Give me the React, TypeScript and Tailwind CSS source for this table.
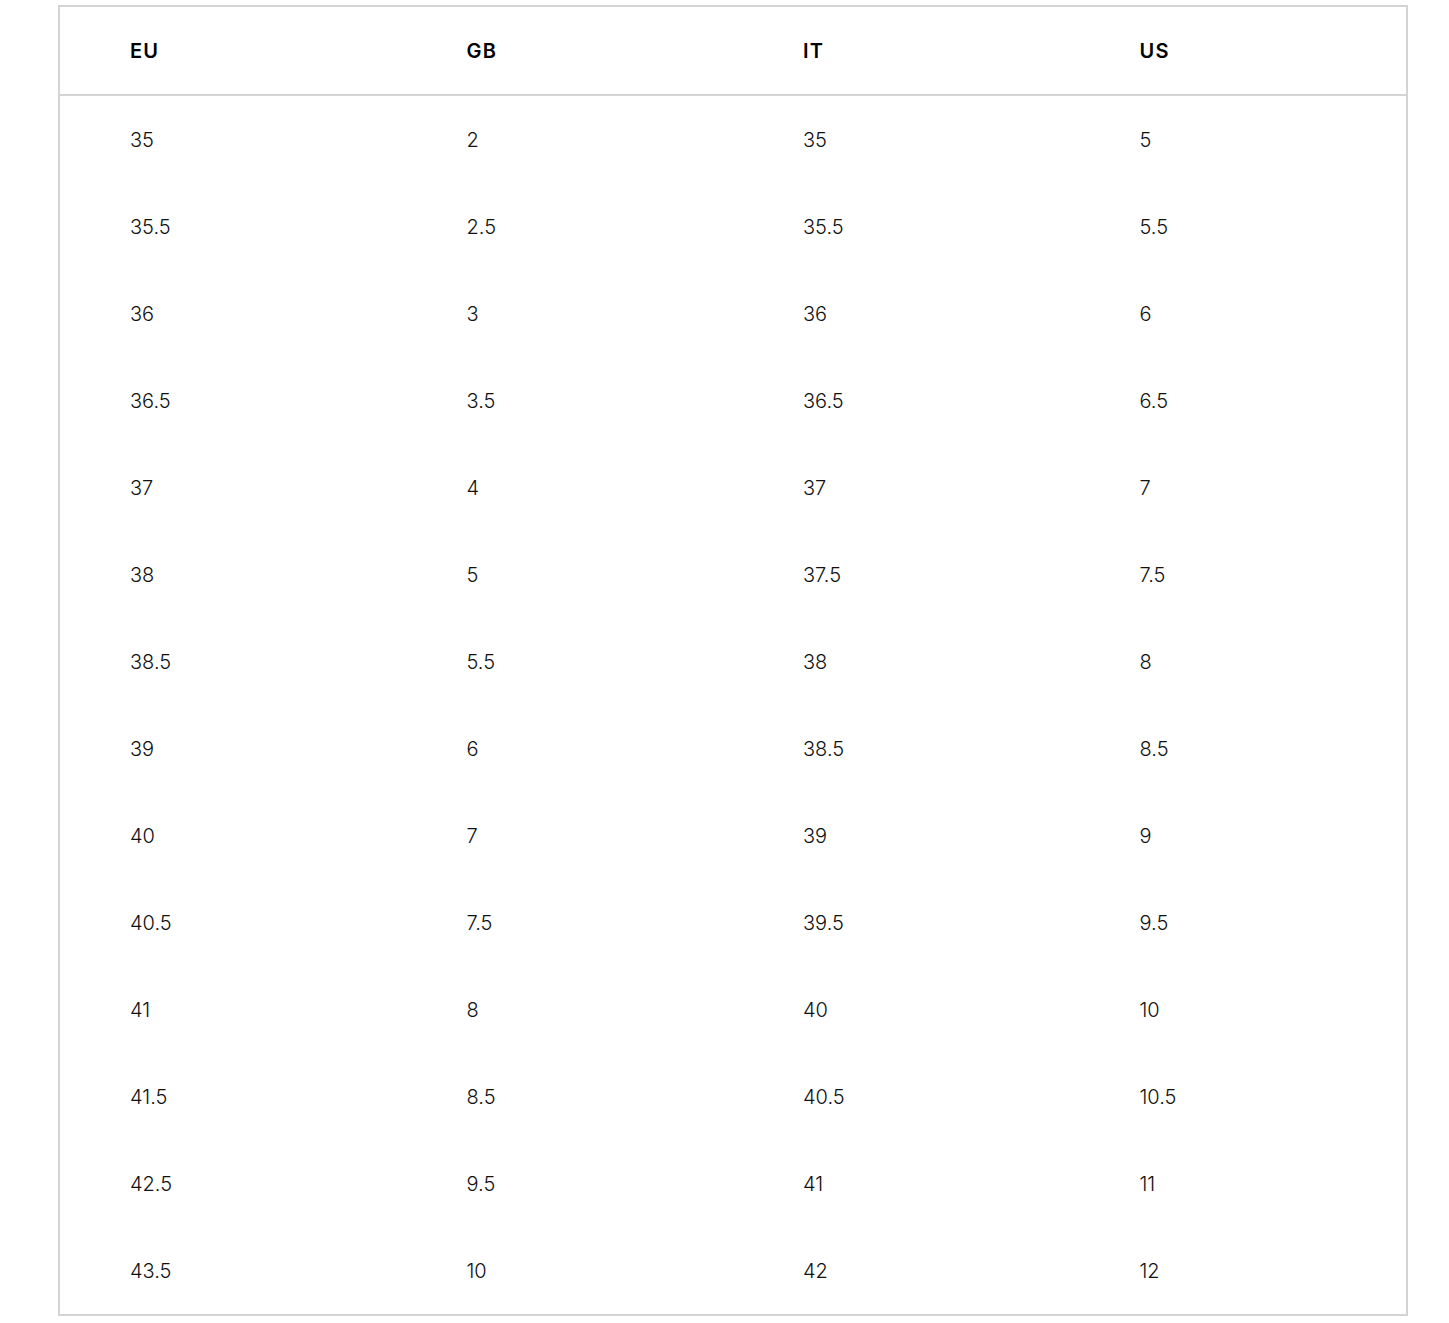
const rows: string[][] = [
  ['35', '2', '35', '5'],
  ['35.5', '2.5', '35.5', '5.5'],
  ['36', '3', '36', '6'],
  ['36.5', '3.5', '36.5', '6.5'],
  ['37', '4', '37', '7'],
  ['38', '5', '37.5', '7.5'],
  ['38.5', '5.5', '38', '8'],
  ['39', '6', '38.5', '8.5'],
  ['40', '7', '39', '9'],
  ['40.5', '7.5', '39.5', '9.5'],
  ['41', '8', '40', '10'],
  ['41.5', '8.5', '40.5', '10.5'],
  ['42.5', '9.5', '41', '11'],
  ['43.5', '10', '42', '12'],
]

const heads = ['EU', 'GB', 'IT', 'US']

export default function App() {
  return (
    <div className="bg-white min-h-[1323px] pt-[5px] font-['Inter',sans-serif] text-black">
      <div className="ml-[58px] w-[1350px] border-2 border-[#d4d4d4]">
        <div className="grid grid-cols-4 h-[89px] items-center border-b-2 border-[#d4d4d4]">
          {heads.map(h => (
            <div key={h} className="pl-[70px] text-[20px] font-semibold tracking-[1.2px]">{h}</div>
          ))}
        </div>
        {rows.map((r, i) => (
          <div key={i} className="grid grid-cols-4 h-[87px] items-center">
            {r.map((c, j) => (
              <div key={j} className="pl-[70px] text-[20px] font-light text-[#111]">{c}</div>
            ))}
          </div>
        ))}
      </div>
    </div>
  )
}
